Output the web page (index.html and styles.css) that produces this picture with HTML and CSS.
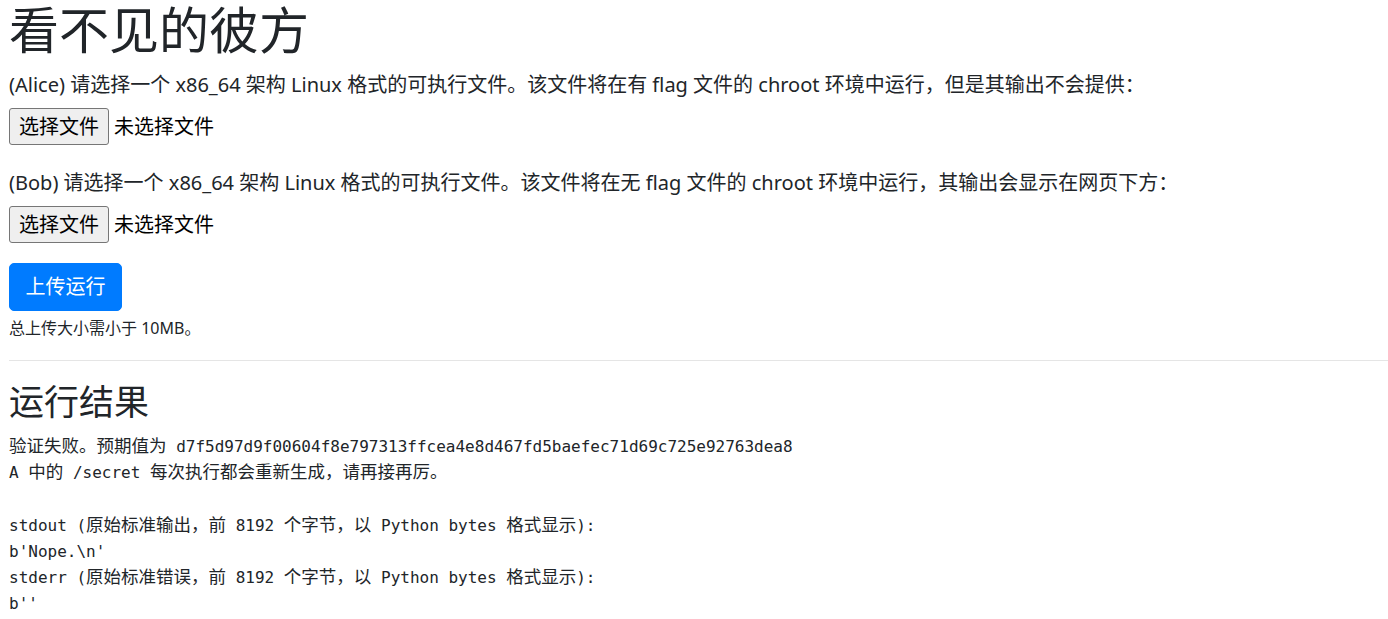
FILE: index.html
```html
<!DOCTYPE html>
<html lang="zh-CN">
<head>
<meta charset="utf-8">
<title>看不见的彼方</title>
<link rel="stylesheet" href="styles.css">
</head>
<body>
<main class="page">
  <h1 class="title">看不见的彼方</h1>
  <form class="upload-form">
    <div class="field">
      <p class="field-label">(Alice) 请选择一个 x86_64 架构 Linux 格式的可执行文件。该文件将在有 flag 文件的 chroot 环境中运行，但是其输出不会提供：</p>
      <div class="file-row">
        <span class="file-btn">选择文件</span>
        <span class="file-name">未选择文件</span>
      </div>
    </div>
    <div class="field">
      <p class="field-label">(Bob) 请选择一个 x86_64 架构 Linux 格式的可执行文件。该文件将在无 flag 文件的 chroot 环境中运行，其输出会显示在网页下方：</p>
      <div class="file-row">
        <span class="file-btn">选择文件</span>
        <span class="file-name">未选择文件</span>
      </div>
    </div>
    <button type="button" class="btn-primary">上传运行</button>
    <small class="form-text">总上传大小需小于 10MB。</small>
  </form>
  <hr class="divider">
  <h2 class="section-title">运行结果</h2>
<pre class="result"><span class="zh">验证失败。预期值为</span> d7f5d97d9f00604f8e797313ffcea4e8d467fd5baefec71d69c725e92763dea8
A <span class="zh">中的</span> /secret <span class="zh">每次执行都会重新生成，请再接再厉。</span>

stdout (<span class="zh">原始标准输出，前</span> 8192 <span class="zh">个字节，以</span> Python bytes <span class="zh">格式显示</span>):
b'Nope.\n'
stderr (<span class="zh">原始标准错误，前</span> 8192 <span class="zh">个字节，以</span> Python bytes <span class="zh">格式显示</span>):
b''</pre>
</main>
</body>
</html>
```

FILE: styles.css
```css
html, body {
  margin: 0;
  padding: 0;
  background: #fff;
}

body {
  font-family: "Noto Sans", "Noto Sans CJK SC", sans-serif;
  font-size: 20px;
  line-height: 1.5;
  color: #212529;
}

.page {
  padding-left: 9px;
}

.title {
  margin: 0 0 10px 0;
  font-size: 50px;
  font-weight: 400;
  line-height: 60px;
}

.upload-form {
  display: flex;
  flex-direction: column;
  align-items: flex-start;
}

.field {
  margin-bottom: 23px;
}

.field + .field {
  margin-bottom: 20px;
}

.field-label {
  margin: 0 0 8px 0;
  font-size: 20px;
  line-height: 30px;
}

.file-row {
  display: flex;
  align-items: center;
  gap: 5px;
  height: 37px;
}

.file-btn {
  display: inline-flex;
  align-items: center;
  justify-content: center;
  box-sizing: border-box;
  height: 37px;
  width: 100px;
  background: #efefef;
  border: 1px solid #767676;
  border-radius: 3px;
  font-size: 20px;
  color: #000;
}

.file-name {
  font-size: 20px;
  color: #000;
}

.btn-primary {
  box-sizing: border-box;
  height: 48px;
  width: 113px;
  padding: 0;
  background: #007bff;
  border: 1px solid #007bff;
  border-radius: 5px;
  color: #fff;
  font-family: "Noto Sans", "Noto Sans CJK SC", sans-serif;
  font-size: 20px;
  line-height: 30px;
}

.form-text {
  display: block;
  margin-top: 5px;
  font-size: 16px;
  line-height: 24px;
  color: #212529;
}

.divider {
  margin: 20px 0;
  border: 0;
  border-top: 1px solid rgba(0, 0, 0, 0.1);
  height: 0;
}

.section-title {
  margin: 0 0 11px 0;
  font-size: 35px;
  font-weight: 400;
  line-height: 42px;
}

.result {
  margin: 0;
  font-family: "DejaVu Sans Mono", "Noto Sans CJK SC", monospace;
  font-size: 16px;
  line-height: 26.2px;
  color: #212529;
}

.result .zh {
  font-family: "Noto Sans CJK SC", sans-serif;
  font-size: 17.5px;
  line-height: 1;
}
```
